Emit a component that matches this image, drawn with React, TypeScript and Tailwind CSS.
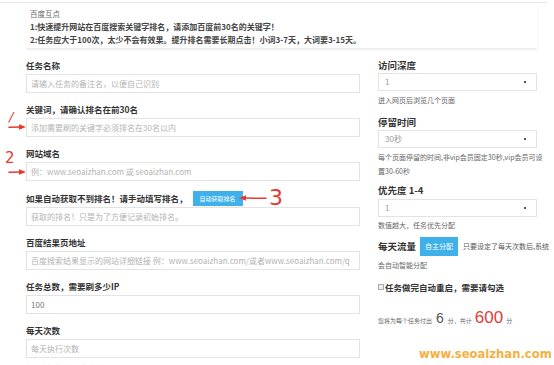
import React from 'react';

const font = { fontFamily: '"Microsoft YaHei", "Noto Sans CJK SC", "Liberation Sans", sans-serif' };
const hand = { fontFamily: '"DejaVu Sans", sans-serif' };

// --- Form pieces ---

const Label: React.FC<{ children: React.ReactNode }> = ({ children }) => (
  <div className="h-[14px] leading-[14px] mb-[2px] text-[8.5px] font-bold text-[#333] whitespace-nowrap">{children}</div>
);

const Field: React.FC<{ placeholder?: string; value?: string }> = ({ placeholder, value }) => (
  <div className="h-[19px] mb-[9px] border border-[#e3e3e3] bg-white flex items-center px-[4px] text-[8px] leading-[12px]">
    {value ? <span className="text-[#777]">{value}</span> : <span className="text-[#b3b3b3] whitespace-nowrap">{placeholder}</span>}
  </div>
);

const SelectBox: React.FC<{ value: string; className?: string }> = ({ value, className }) => (
  <div className={`h-[18px] border border-[#e3e3e3] bg-white flex items-center justify-between px-[6px] text-[8px] text-[#999] ${className || ''}`}>
    <span>{value}</span>
    <span className="w-[2px] h-[2px] bg-[#555] mr-[4px]" />
  </div>
);

const Hint: React.FC<{ children: React.ReactNode; className?: string }> = ({ children, className }) => (
  <div className={`text-[7px] leading-[14px] text-[#666] whitespace-nowrap ${className || ''}`}>{children}</div>
);

const SideLabel: React.FC<{ children: React.ReactNode; className?: string }> = ({ children, className }) => (
  <div className={`h-[14px] leading-[14px] text-[9.5px] font-bold text-[#333] whitespace-nowrap ${className || ''}`}>{children}</div>
);

// --- Red hand-drawn markers ---

const Arrow: React.FC<{ className?: string; flip?: boolean; w?: number }> = ({ className, flip, w = 18 }) => (
  <svg width={w} height="8" viewBox={`0 0 ${w} 8`} className={className} style={flip ? { transform: 'scaleX(-1)' } : undefined}>
    <path d={`M1 4.3 L${w - 5} 4`} stroke="#e8382e" strokeWidth="1.5" fill="none" strokeLinecap="round" />
    <path d={`M${w - 7} 1.2 L${w} 4 L${w - 7} 6.8 Z`} fill="#e8382e" />
  </svg>
);

export default function App() {
  return (
    <div className="relative w-[554px] h-[365px] overflow-hidden bg-white" style={font}>
      <div className="h-[3px] border-b border-[#e6e6e6] mr-[7px]" />

      {/* notice */}
      <div className="ml-[26px] mr-[17px] pl-[4px] pt-[4px] pb-[2px] shadow-[0_2px_2px_rgba(0,0,0,0.07)]">
        <div className="text-[7.5px] leading-[13px] text-[#666]">百度互点</div>
        <div className="text-[8px] leading-[13px] font-bold text-[#444]">1:快速提升网站在百度搜索关键字排名，请添加百度前30名的关键字！</div>
        <div className="text-[8px] leading-[13px] font-bold text-[#444]">2:任务应大于100次，太少不会有效果。提升排名需要长期点击！小词3-7天，大词要3-15天。</div>
      </div>

      <div className="flex pl-[26px] pt-[10px]">
        {/* left column */}
        <div className="w-[334px]">
          <Label>任务名称</Label>
          <Field placeholder="请输入任务的备注名，以便自己识别" />
          <Label>关键词，请确认排名在前30名</Label>
          <Field placeholder="添加需要刷的关键字必须排名在30名以内" />
          <Label>网站域名</Label>
          <Field placeholder="例：www.seoaizhan.com 或 seoaizhan.com" />
          <div className="h-[16px] mb-[1px] flex items-center text-[8.5px] font-bold text-[#333] whitespace-nowrap">
            <span>如果自动获取不到排名！请手动填写排名，</span>
            <span className="ml-[5px] h-[15px] w-[50px] bg-[#3fb1ea] text-white text-[6px] font-normal flex items-center justify-center">自动获取排名</span>
          </div>
          <Field placeholder="获取的排名！只是为了方便记录初始排名。" />
          <Label>百度结果页地址</Label>
          <Field placeholder="百度搜索结果显示的网站详细链接 例：www.seoaizhan.com/或者www.seoaizhan.com/q" />
          <Label>任务总数，需要刷多少IP</Label>
          <Field value="100" />
          <Label>每天次数</Label>
          <Field placeholder="每天执行次数" />
          <Hint className="-mt-[6px]">每天次数大关键词指数的1.0</Hint>
        </div>

        {/* right column */}
        <div className="w-[159px] ml-[18px]">
          <SideLabel>访问深度</SideLabel>
          <SelectBox value="1" className="mt-[1px]" />
          <Hint className="mt-[2px]">进入网页后浏览几个页面</Hint>
          <SideLabel className="mt-[8px]">停留时间</SideLabel>
          <SelectBox value="30秒" className="mt-[1px]" />
          <Hint className="mt-[2px]">每个页面停留的时间,非vip会员固定30秒,vip会员可设<br />置30-60秒</Hint>
          <SideLabel className="mt-[5px]">优先度 1-4</SideLabel>
          <SelectBox value="1" className="mt-[2px]" />
          <Hint className="mt-[1px]">数值越大，任务优先分配</Hint>
          <div className="mt-[5px] h-[19px] flex items-center whitespace-nowrap">
            <span className="text-[9.5px] font-bold text-[#333]">每天流量</span>
            <span className="ml-[4px] h-[19px] w-[38px] shrink-0 bg-[#3fb1ea] text-white text-[7px] flex items-center justify-center">自主分配</span>
            <span className="ml-[5px] text-[7px] text-[#555]">只要设定了每天次数后,系统</span>
          </div>
          <Hint className="mt-[2px]">会自动智能分配</Hint>
          <div className="mt-[8px] h-[14px] flex items-center text-[8.5px] font-bold text-[#333] whitespace-nowrap">
            <span className="w-[6px] h-[6px] border border-[#aaa] bg-[#eee] mr-[1px]" />
            <span>任务做完自动重启，需要请勾选</span>
          </div>
          <div className="mt-[11px] h-[24px] flex items-baseline text-[6px] text-[#666] whitespace-nowrap" style={{ fontFamily: '"Liberation Sans", "Noto Sans CJK SC", sans-serif' }}>
            <span>您将为每个任务付出</span>
            <span className="text-[14px] mx-[4px] text-[#555]">6</span>
            <span>分，共计</span>
            <span className="text-[17px] mx-[3px] text-[#e0403a]">600</span>
            <span>分</span>
          </div>
        </div>
      </div>

      {/* annotations */}
      <div className="absolute left-[9px] top-[110px] text-[13px] leading-none text-[#e8382e] italic" style={hand}>/</div>
      <Arrow className="absolute left-[8px] top-[123px]" />
      <div className="absolute left-[5px] top-[151px] text-[15px] leading-none text-[#e8382e]" style={hand}>2</div>
      <Arrow className="absolute left-[8px] top-[168px]" />
      <Arrow className="absolute left-[239px] top-[194px]" flip w={28} />
      <div className="absolute left-[269px] top-[187px] text-[22px] leading-none text-[#e8382e]" style={hand}>3</div>

      {/* watermark */}
      <div className="absolute left-[419px] top-[349px] text-[11.6px] leading-none font-bold text-[#f4b040]" style={hand}>www.seoaizhan.com</div>
    </div>
  );
}
